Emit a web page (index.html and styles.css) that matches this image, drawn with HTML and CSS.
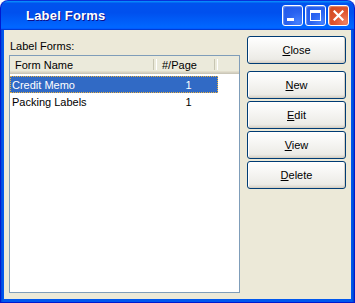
FILE: index.html
```html
<!DOCTYPE html>
<html lang="en">
<head>
    <meta charset="UTF-8">
    <title>Label Forms</title>
    <link rel="stylesheet" href="styles.css">
</head>
<body>
    <div class="window">
        <!-- Title bar -->
        <div class="title-bar">
            <span class="title-text">Label Forms</span>
            <div class="title-controls">
                <button class="ctl minimize" aria-label="Minimize"><span class="min-bar"></span></button>
                <button class="ctl maximize" aria-label="Maximize"><span class="max-box"></span></button>
                <button class="ctl close" aria-label="Close">
                    <svg width="11" height="11" viewBox="0 0 11 11">
                        <path d="M1.5 1.5 L9.5 9.5 M9.5 1.5 L1.5 9.5" stroke="#fff" stroke-width="2.2" stroke-linecap="square"/>
                    </svg>
                </button>
            </div>
        </div>

        <div class="window-body">
            <!-- List of forms -->
            <div class="list-column">
                <div class="list-label">Label Forms:</div>
                <div class="listview">
                    <div class="lv-header">
                        <div class="lv-col name">Form Name</div>
                        <div class="lv-col count">#/Page</div>
                        <div class="lv-col filler"></div>
                    </div>
                    <div class="lv-rows">
                        <div class="lv-row selected">
                            <span class="cell name">Credit Memo</span>
                            <span class="cell count">1</span>
                        </div>
                        <div class="lv-row">
                            <span class="cell name">Packing Labels</span>
                            <span class="cell count">1</span>
                        </div>
                    </div>
                </div>
            </div>

            <!-- Action buttons -->
            <div class="button-column">
                <button class="btn close-btn"><u>C</u>lose</button>
                <button class="btn"><u>N</u>ew</button>
                <button class="btn"><u>E</u>dit</button>
                <button class="btn"><u>V</u>iew</button>
                <button class="btn"><u>D</u>elete</button>
            </div>
        </div>
    </div>
</body>
</html>
```

FILE: styles.css
```css
/* Base */
* {
    margin: 0;
    padding: 0;
    box-sizing: border-box;
}

body {
    width: 355px;
    height: 303px;
    background: #fff;
    font-family: "Liberation Sans", Arial, sans-serif;
    font-size: 11px;
    color: #000;
    overflow: hidden;
}

/* Window frame */
.window {
    width: 355px;
    height: 303px;
    display: flex;
    flex-direction: column;
    border-radius: 8px 8px 0 0;
    border: 1px solid #0019cf;
    border-top-color: #0831d9;
    background: linear-gradient(90deg, #0044d8, #0058ee 2px, #0058ee calc(100% - 2px), #0040c8);
    padding: 0 3px 3px 3px;
    overflow: hidden;
}

.title-bar {
    height: 29px;
    margin: 0 -3px;
    padding: 0 5px 0 25px;
    display: flex;
    align-items: center;
    justify-content: space-between;
    background: linear-gradient(180deg, #0997ff, #0053ee 8%, #0050ee 40%, #0066ff 88%, #0066ff 93%, #005bff 95%, #003dd7 96%, #003dd7);
    border-radius: 7px 7px 0 0;
}

.title-text {
    color: #fff;
    font-family: "Liberation Sans", Arial, sans-serif;
    font-weight: bold;
    font-size: 13px;
    letter-spacing: 0.2px;
    text-shadow: 1px 1px #0f1089;
    margin-top: -1px;
}

.title-controls {
    display: flex;
    gap: 2px;
    margin-top: 0;
}

.ctl {
    width: 21px;
    height: 21px;
    border: 1px solid #fff;
    border-radius: 3px;
    display: flex;
    align-items: center;
    justify-content: center;
    position: relative;
    background: radial-gradient(circle at 80% 85%, #4580ff 0%, #2a63f0 45%, #1d55e8 100%);
    box-shadow: inset 1px 1px 1px rgba(255, 255, 255, 0.35);
}

.ctl.close {
    background: radial-gradient(circle at 85% 85%, #f08060 0%, #e05530 45%, #cc4418 100%);
}

.min-bar {
    position: absolute;
    left: 4px;
    bottom: 4px;
    width: 7px;
    height: 3px;
    background: #fff;
}

.max-box {
    width: 11px;
    height: 11px;
    border: 1px solid #fff;
    border-top-width: 3px;
}

/* Dialog body */
.window-body {
    flex: 1;
    display: flex;
    gap: 7px;
    padding: 6px 5px 6px 5px;
    background: #ece9d8;
}

.list-column {
    display: flex;
    flex-direction: column;
    width: 231px;
}

.list-label {
    height: 19px;
    padding: 4px 0 0 1px;
}

.listview {
    flex: 1;
    background: #fff;
    border: 1px solid #7f9db9;
}

.lv-header {
    display: flex;
    height: 18px;
    background: #ebeadb;
    box-shadow: inset 0 -1px #cbc7b8, inset 0 -2px #d6d2c2, inset 0 -3px #e2decd;
}

.lv-col {
    position: relative;
    padding: 3px 0 0 5px;
}

.lv-col.name {
    width: 147px;
}

.lv-col.count {
    width: 61px;
}

.lv-col.filler {
    flex: 1;
}

.lv-col.name::after,
.lv-col.count::after {
    content: "";
    position: absolute;
    right: 0;
    top: 3px;
    height: 11px;
    width: 2px;
    border-left: 1px solid #c7c5b2;
    border-right: 1px solid #fff;
}

.lv-rows {
    margin-top: 2px;
}

.lv-row {
    display: flex;
    width: 208px;
    height: 17px;
    align-items: center;
    border: 1px dotted transparent;
}

.lv-row.selected {
    background: #316ac5;
    color: #fff;
    border-color: #e8b040;
}

.cell.name {
    width: 146px;
    padding-left: 1px;
}

.cell.count {
    flex: 1;
    text-align: center;
    padding-left: 3px;
}

/* Buttons */
.button-column {
    display: flex;
    flex-direction: column;
    gap: 2px;
    width: 99px;
}

.btn {
    height: 28px;
    font-family: "Liberation Sans", Arial, sans-serif;
    font-size: 11px;
    color: #000;
    border: 1px solid #003c74;
    border-radius: 3px;
    background: linear-gradient(180deg, #fff, #ecebe6 86%, #d6d0c5);
    box-shadow: inset -1px -1px #d6d0c5, inset 1px 1px #fff;
}

.btn.close-btn {
    margin-bottom: 5px;
}
```
